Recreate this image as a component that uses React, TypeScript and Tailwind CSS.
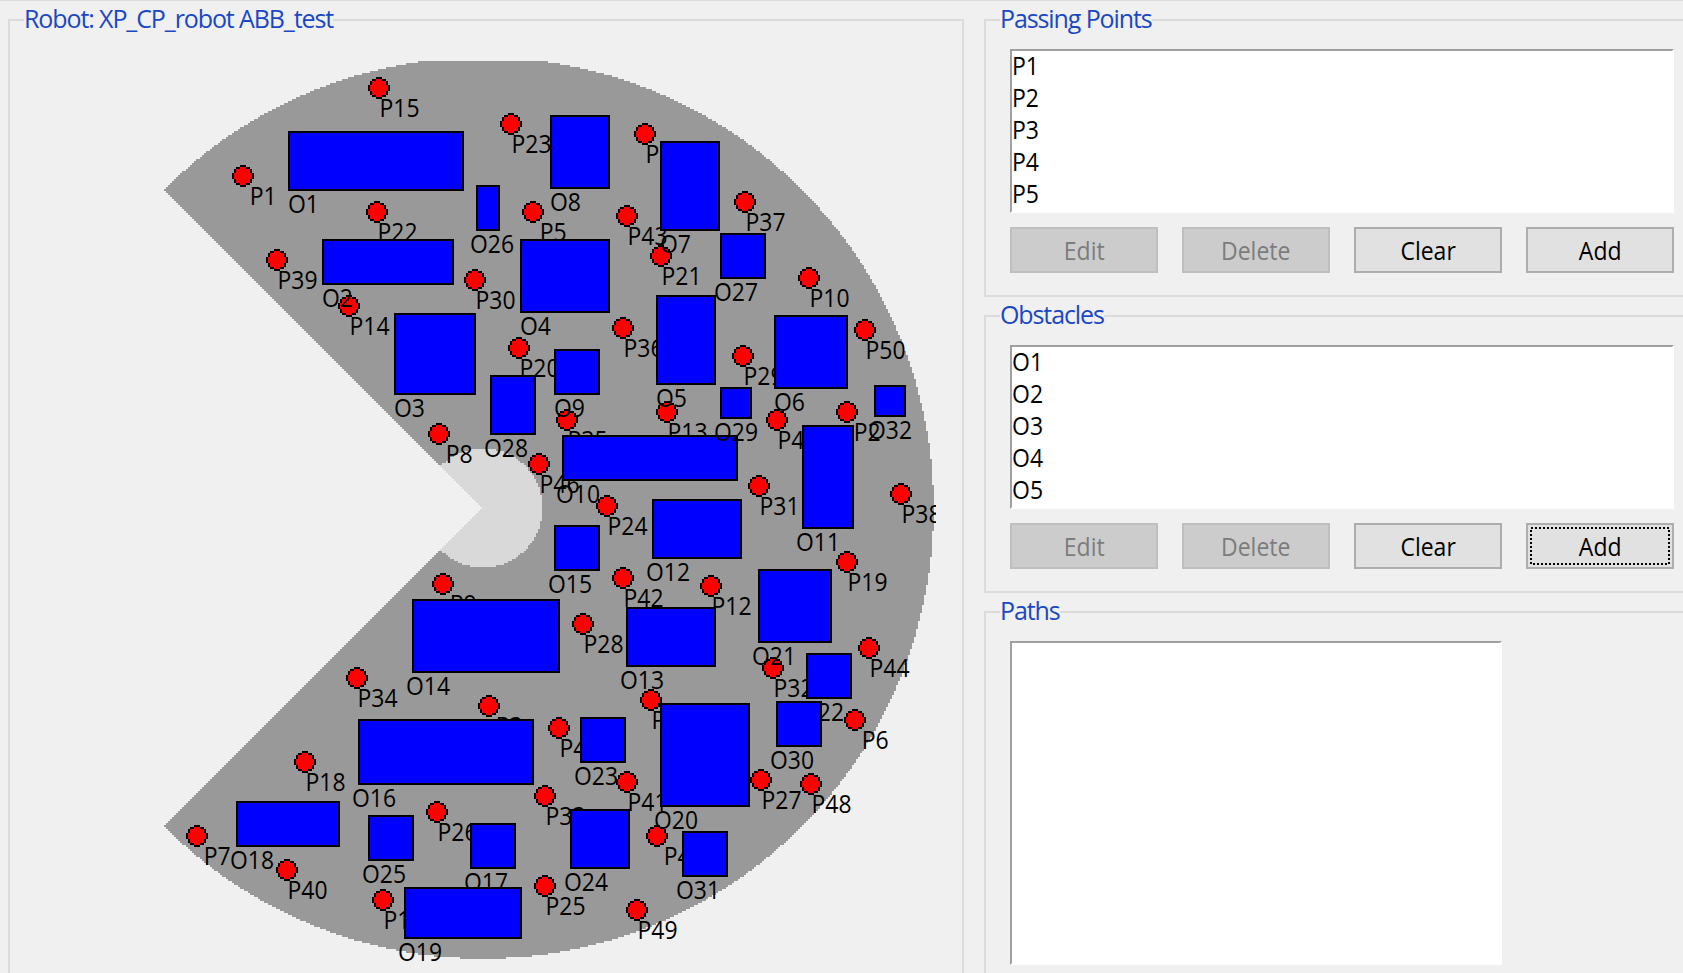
import type { ReactNode } from "react";

type Point = [label: string, cx: number, cy: number];
type Box = [label: string, left: number, top: number, right: number, bottom: number];

const POINTS: Point[] = [
  ["P1", 243, 176], ["P2", 847, 412], ["P3", 489, 706], ["P4", 657, 836], ["P5", 533, 212],
  ["P6", 855, 720], ["P7", 197, 836], ["P8", 439, 434], ["P9", 443, 584], ["P10", 809, 278],
  ["P11", 645, 134], ["P12", 711, 586], ["P13", 667, 412], ["P14", 349, 306], ["P15", 379, 88],
  ["P16", 651, 700], ["P17", 383, 900], ["P18", 305, 762], ["P19", 847, 562], ["P20", 519, 348],
  ["P21", 661, 256], ["P22", 377, 212], ["P23", 511, 124], ["P24", 607, 506], ["P25", 545, 886],
  ["P26", 437, 812], ["P27", 761, 780], ["P28", 583, 624], ["P29", 743, 356], ["P30", 475, 280],
  ["P31", 759, 486], ["P32", 773, 668], ["P33", 545, 796], ["P34", 357, 678], ["P35", 567, 420],
  ["P36", 623, 328], ["P37", 745, 202], ["P38", 901, 494], ["P39", 277, 260], ["P40", 287, 870],
  ["P41", 627, 782], ["P42", 623, 578], ["P43", 627, 216], ["P44", 869, 648], ["P45", 777, 420],
  ["P46", 539, 464], ["P47", 559, 728], ["P48", 811, 784], ["P49", 637, 910], ["P50", 865, 330],
];

const OBSTACLES: Box[] = [
  ["O1", 288, 131, 464, 191], ["O2", 322, 239, 454, 285], ["O3", 394, 313, 476, 395],
  ["O4", 520, 239, 610, 313], ["O5", 656, 295, 716, 385], ["O6", 774, 315, 848, 389],
  ["O7", 660, 141, 720, 231], ["O8", 550, 115, 610, 189], ["O9", 554, 349, 600, 395],
  ["O10", 562, 435, 738, 481], ["O11", 802, 425, 854, 529], ["O12", 652, 499, 742, 559],
  ["O13", 626, 607, 716, 667], ["O14", 412, 599, 560, 673], ["O15", 554, 525, 600, 571],
  ["O16", 358, 719, 534, 785], ["O17", 470, 823, 516, 869], ["O18", 236, 801, 340, 847],
  ["O19", 404, 887, 522, 939], ["O20", 660, 703, 750, 807], ["O21", 758, 569, 832, 643],
  ["O22", 806, 653, 852, 699], ["O23", 580, 717, 626, 763], ["O24", 570, 809, 630, 869],
  ["O25", 368, 815, 414, 861], ["O26", 476, 185, 500, 231], ["O27", 720, 233, 766, 279],
  ["O28", 490, 375, 536, 435], ["O29", 720, 387, 752, 419], ["O30", 776, 701, 822, 747],
  ["O31", 682, 831, 728, 877], ["O32", 874, 385, 906, 417],
];

const CENTER_X = 483;
const CENTER_Y = 508;
const TOP = 61;
const snap = (v: number) => Math.round(v / 2) * 2;

/** Reach area with a 90° opening to the left, rasterised in 2px rows. */
function sector(radius: number): string {
  let d = "";
  for (let y = TOP; y < CENTER_Y + radius + 1; y += 2) {
    const dy = Math.abs(y + 1 - CENTER_Y);
    if (dy >= radius) continue;
    const half = Math.sqrt(radius * radius - dy * dy);
    const left = snap(Math.max(CENTER_X - 1 - dy, CENTER_X - half));
    const right = snap(CENTER_X + half);
    d += `M${left} ${y}H${right}v2H${left}z`;
  }
  return d;
}

const OUTER = sector(450.6);
const INNER = sector(59.5);

// Half widths, in 2px cells, of each row of the 11-cell marker disc.
const DISC = [1.5, 3.5, 4.5, 4.5, 5.5, 5.5, 5.5, 4.5, 4.5, 3.5, 1.5];
const DISC_FILL = [0, 1.5, 3.5, 3.5, 4.5, 4.5, 4.5, 3.5, 3.5, 1.5, 0];
const rows = (widths: number[]) =>
  widths.map((w, i) => (w ? `M${-w * 2} ${i * 2 - 11}h${w * 4}v2h${-w * 4}z` : "")).join("");
const DISC_PATH = rows(DISC);
const DISC_FILL_PATH = rows(DISC_FILL);

function Tag({ x, y, children }: { x: number; y: number; children: string }) {
  const width = (children[0] === "O" ? 18 : 14) + (children.length - 1) * 13;
  return (
    <text x={x} y={y} textLength={width} lengthAdjust="spacingAndGlyphs" className="fill-black">
      {children}
    </text>
  );
}

function RobotMap() {
  return (
    <svg
      width="926"
      height="912"
      viewBox="10 61 926 912"
      className="block font-['Open_Sans','Noto_Sans',sans-serif] text-[25px]"
    >
      <path d={OUTER} className="fill-[#999999]" shapeRendering="crispEdges" />
      <path d={INNER} className="fill-[#d9d9d9]" shapeRendering="crispEdges" />
      {POINTS.map(([label, cx, cy]) => (
        <g key={label}>
          <g transform={`translate(${cx} ${cy})`} shapeRendering="crispEdges">
            <path d={DISC_PATH} className="fill-black" />
            <path d={DISC_FILL_PATH} className="fill-[#ff0000]" />
          </g>
          <Tag x={cx + (label.length === 2 ? 6.7 : 0.5)} y={cy + 29}>{label}</Tag>
        </g>
      ))}
      {OBSTACLES.map(([label, left, top, right, bottom]) => (
        <g key={label}>
          <rect
            x={left + 1}
            y={top + 1}
            width={right - left - 2}
            height={bottom - top - 2}
            className="fill-[#0000ff] stroke-black stroke-2"
            shapeRendering="crispEdges"
          />
          <Tag x={left - (label.length === 2 ? 0 : 6)} y={bottom + 22}>{label}</Tag>
        </g>
      ))}
    </svg>
  );
}

function Group({ title, className, children }: { title: string; className: string; children: ReactNode }) {
  return (
    <section className={`flex flex-col items-start border-2 border-[#dcdcdc] ${className}`}>
      <h2 className="-mt-5 h-[34px] shrink-0 ml-3.5 bg-[#f0f0f0] text-[25px] leading-[34px] tracking-[-1.1px] whitespace-nowrap text-[#1a48c4]">
        {title}
      </h2>
      {children}
    </section>
  );
}

function ListBox({ items, className }: { items: string[]; className: string }) {
  return (
    <ul className={`shrink-0 border-2 border-t-[#a0a0a0] border-r-white border-b-white border-l-[#a0a0a0] bg-white ${className}`}>
      {items.map((item) => (
        <li key={item} className="h-8 origin-left scale-x-[0.92] text-[25px] leading-[28px]">
          {item}
        </li>
      ))}
    </ul>
  );
}

function Button({ label, disabled, focused }: { label: string; disabled?: boolean; focused?: boolean }) {
  return (
    <button
      disabled={disabled}
      className={`relative flex h-[46px] w-[148px] items-center justify-center border-2 pb-px text-[25px] leading-8 ${
        disabled ? "border-[#bfbfbf] bg-[#cccccc] text-[#7c7c7c]" : "border-[#adadad] bg-[#e1e1e1] text-black"
      }`}
    >
      <span className="scale-x-[0.92]">{label}</span>
      {focused && (
        <svg width="140" height="38" className="absolute top-0.5 left-0.5" shapeRendering="crispEdges">
          <rect x="1" y="1" width="138" height="36" fill="none" stroke="#000" strokeWidth="2" strokeDasharray="2 2" />
        </svg>
      )}
    </button>
  );
}

function Editor({ title, items, focusAdd }: { title: string; items: string[]; focusAdd?: boolean }) {
  return (
    <Group title={title} className="h-[278px] w-[720px] shrink-0">
      <ListBox items={items} className="mt-3.5 ml-6 h-[164px] w-[664px]" />
      <div className="mt-3.5 ml-6 flex gap-6">
        <Button label="Edit" disabled />
        <Button label="Delete" disabled />
        <Button label="Clear" />
        <Button label="Add" focused={focusAdd} />
      </div>
    </Group>
  );
}

export default function App() {
  return (
    <main className="flex h-[973px] w-[1683px] gap-5 overflow-hidden border-t border-[#dcdcdc] bg-[#f0f0f0] pt-[18px] pl-2 font-['Open_Sans','Noto_Sans',sans-serif] text-black">
      <Group title="Robot: XP_CP_robot ABB_test" className="h-[1000px] w-[956px] shrink-0">
        <div className="pt-[26px]">
          <RobotMap />
        </div>
      </Group>
      <div className="flex shrink-0 flex-col gap-[18px]">
        <Editor title="Passing Points" items={["P1", "P2", "P3", "P4", "P5"]} />
        <Editor title="Obstacles" items={["O1", "O2", "O3", "O4", "O5"]} focusAdd />
        <Group title="Paths" className="h-[400px] w-[720px] shrink-0">
          <ListBox items={[]} className="mt-3.5 ml-6 h-[324px] w-[492px]" />
        </Group>
      </div>
    </main>
  );
}
